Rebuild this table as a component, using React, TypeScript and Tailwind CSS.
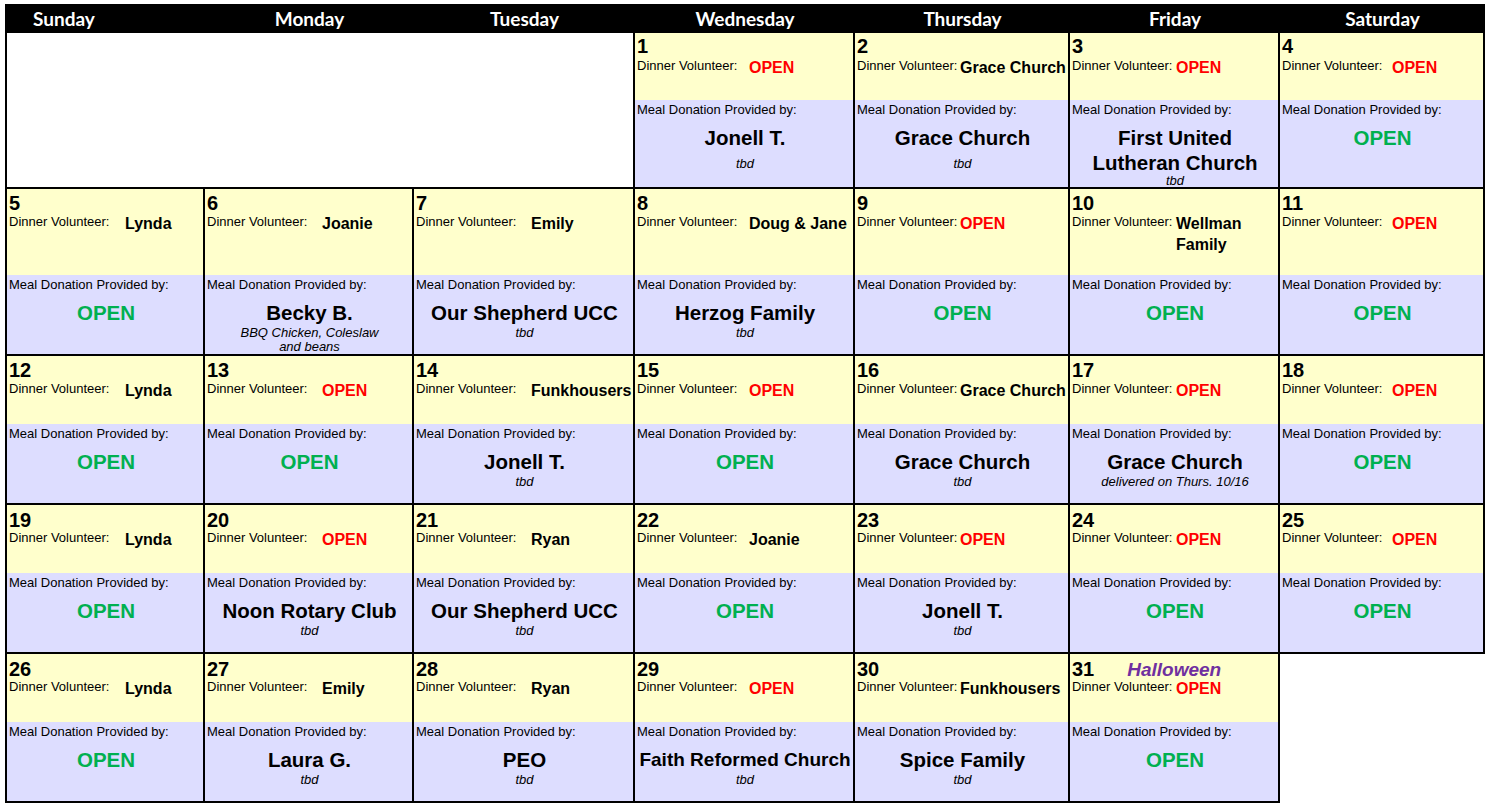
import React from "react";

type Day = {
  n: number;
  vol: string;
  don: string;
  note?: string;
  small?: boolean;
  noteMt?: string;
  holiday?: string;
};

type Cell = Day | "blank" | "merged" | null;

const DAYS = ["Sunday", "Monday", "Tuesday", "Wednesday", "Thursday", "Friday", "Saturday"];

// offset of the volunteer name inside each column (label box width)
const LABEL_W = ["w-[116px]", "w-[115px]", "w-[115px]", "w-[112px]", "w-[103px]", "w-[104px]", "w-[110px]"];

const WEEKS: { h: string; top: string; num: string; note: string; cells: Cell[] }[] = [
  {
    h: "h-[156px]",
    top: "h-[67px]",
    num: "pt-[4px]",
    note: "mt-[7px]",
    cells: [
      "merged",
      null,
      null,
      { n: 1, vol: "OPEN", don: "Jonell T.", note: "tbd" },
      { n: 2, vol: "Grace Church", don: "Grace Church", note: "tbd" },
      { n: 3, vol: "OPEN", don: "First United\nLutheran Church", note: "tbd", noteMt: "-mt-[1px]" },
      { n: 4, vol: "OPEN", don: "OPEN" },
    ],
  },
  {
    h: "h-[167px]",
    top: "h-[86px]",
    num: "pt-[5px]",
    note: "mt-[1px]",
    cells: [
      { n: 5, vol: "Lynda", don: "OPEN" },
      { n: 6, vol: "Joanie", don: "Becky B.", note: "BBQ Chicken, Coleslaw\nand beans" },
      { n: 7, vol: "Emily", don: "Our Shepherd UCC", note: "tbd" },
      { n: 8, vol: "Doug & Jane", don: "Herzog Family", note: "tbd" },
      { n: 9, vol: "OPEN", don: "OPEN" },
      { n: 10, vol: "Wellman\nFamily", don: "OPEN" },
      { n: 11, vol: "OPEN", don: "OPEN" },
    ],
  },
  {
    h: "h-[149px]",
    top: "h-[68px]",
    num: "pt-[5px]",
    note: "mt-[1px]",
    cells: [
      { n: 12, vol: "Lynda", don: "OPEN" },
      { n: 13, vol: "OPEN", don: "OPEN" },
      { n: 14, vol: "Funkhousers", don: "Jonell T.", note: "tbd" },
      { n: 15, vol: "OPEN", don: "OPEN" },
      { n: 16, vol: "Grace Church", don: "Grace Church", note: "tbd" },
      { n: 17, vol: "OPEN", don: "Grace Church", note: "delivered on Thurs. 10/16" },
      { n: 18, vol: "OPEN", don: "OPEN" },
    ],
  },
  {
    h: "h-[149px]",
    top: "h-[68px]",
    num: "pt-[6px]",
    note: "mt-[1px]",
    cells: [
      { n: 19, vol: "Lynda", don: "OPEN" },
      { n: 20, vol: "OPEN", don: "Noon Rotary Club", note: "tbd" },
      { n: 21, vol: "Ryan", don: "Our Shepherd UCC", note: "tbd" },
      { n: 22, vol: "Joanie", don: "OPEN" },
      { n: 23, vol: "OPEN", don: "Jonell T.", note: "tbd" },
      { n: 24, vol: "OPEN", don: "OPEN" },
      { n: 25, vol: "OPEN", don: "OPEN" },
    ],
  },
  {
    h: "h-[149px]",
    top: "h-[68px]",
    num: "pt-[6px]",
    note: "mt-[1px]",
    cells: [
      { n: 26, vol: "Lynda", don: "OPEN" },
      { n: 27, vol: "Emily", don: "Laura G.", note: "tbd" },
      { n: 28, vol: "Ryan", don: "PEO", note: "tbd" },
      { n: 29, vol: "OPEN", don: "Faith Reformed Church", note: "tbd", small: true },
      { n: 30, vol: "Funkhousers", don: "Spice Family", note: "tbd" },
      { n: 31, vol: "OPEN", don: "OPEN", holiday: "Halloween" },
      "blank",
    ],
  },
];

function DayCell({ day, col, week }: { day: Day; col: number; week: (typeof WEEKS)[number] }) {
  const volOpen = day.vol === "OPEN";
  const donOpen = day.don === "OPEN";
  return (
    <div className={`flex flex-col border-r-2 border-b-2 border-black ${col === 0 ? "border-l-2" : ""} ${week.h}`}>
      {/* Dinner volunteer */}
      <div className={`shrink-0 bg-[#ffffcc] pl-[2px] ${week.top}`}>
        <div className="h-[25px]">
          <div className={`flex items-start ${week.num}`}>
            <span className="text-[20px] leading-[19px] font-bold">{day.n}</span>
            {day.holiday && (
              <span className="ml-[33px] text-[19px] leading-[19px] font-bold italic text-[#7030a0]">
                {day.holiday}
              </span>
            )}
          </div>
        </div>
        <div className="flex items-start">
          <span className={`shrink-0 text-[13px] leading-[15px] ${LABEL_W[col]}`}>Dinner Volunteer:</span>
          <span
            className={`-mt-[1px] whitespace-pre text-[16px] leading-[21px] font-bold ${
              volOpen ? "text-[#ff0000]" : "text-black"
            }`}
          >
            {day.vol}
          </span>
        </div>
      </div>
      {/* Meal donation */}
      <div className="min-h-0 flex-1 bg-[#ddddff] pl-[2px] pt-[2px]">
        <div className="text-[13px] leading-[15px]">Meal Donation Provided by:</div>
        <div
          className={`mt-[8px] whitespace-pre text-center font-bold leading-[25px] ${
            day.small ? "text-[19px]" : "text-[20.5px]"
          } ${donOpen ? "text-[#00b050]" : "text-black"}`}
        >
          {day.don}
        </div>
        {day.note && (
          <div className={`whitespace-pre-line text-center text-[13px] leading-[14px] italic ${day.noteMt ?? week.note}`}>
            {day.note}
          </div>
        )}
      </div>
    </div>
  );
}

export default function App() {
  return (
    <div className="min-h-screen bg-white font-['Liberation_Sans',Arial,sans-serif] text-black">
      <div className="ml-[5px] mt-[4px] w-[1480px]">
        {/* Day header */}
        <div className="grid h-[29px] grid-cols-[200px_209px_221px_220px_215px_210px_205px] bg-black font-['Lato',sans-serif] text-[19px] font-bold text-white">
          {DAYS.map((d, i) => (
            <div
              key={d}
              className={`flex items-center leading-[29px] ${i === 0 ? "justify-start pl-[28px]" : "justify-center"}`}
            >
              {d}
            </div>
          ))}
        </div>

        {/* Weeks */}
        {WEEKS.map((week, wi) => (
          <div key={wi} className="grid grid-cols-[200px_209px_221px_220px_215px_210px_205px]">
            {week.cells.map((c, ci) => {
              if (c === null) return null;
              if (c === "merged")
                return (
                  <div key={ci} className={`col-span-3 border-l-2 border-r-2 border-b-2 border-black bg-white ${week.h}`} />
                );
              if (c === "blank") return <div key={ci} className={week.h} />;
              return <DayCell key={ci} day={c} col={ci} week={week} />;
            })}
          </div>
        ))}
      </div>
    </div>
  );
}
